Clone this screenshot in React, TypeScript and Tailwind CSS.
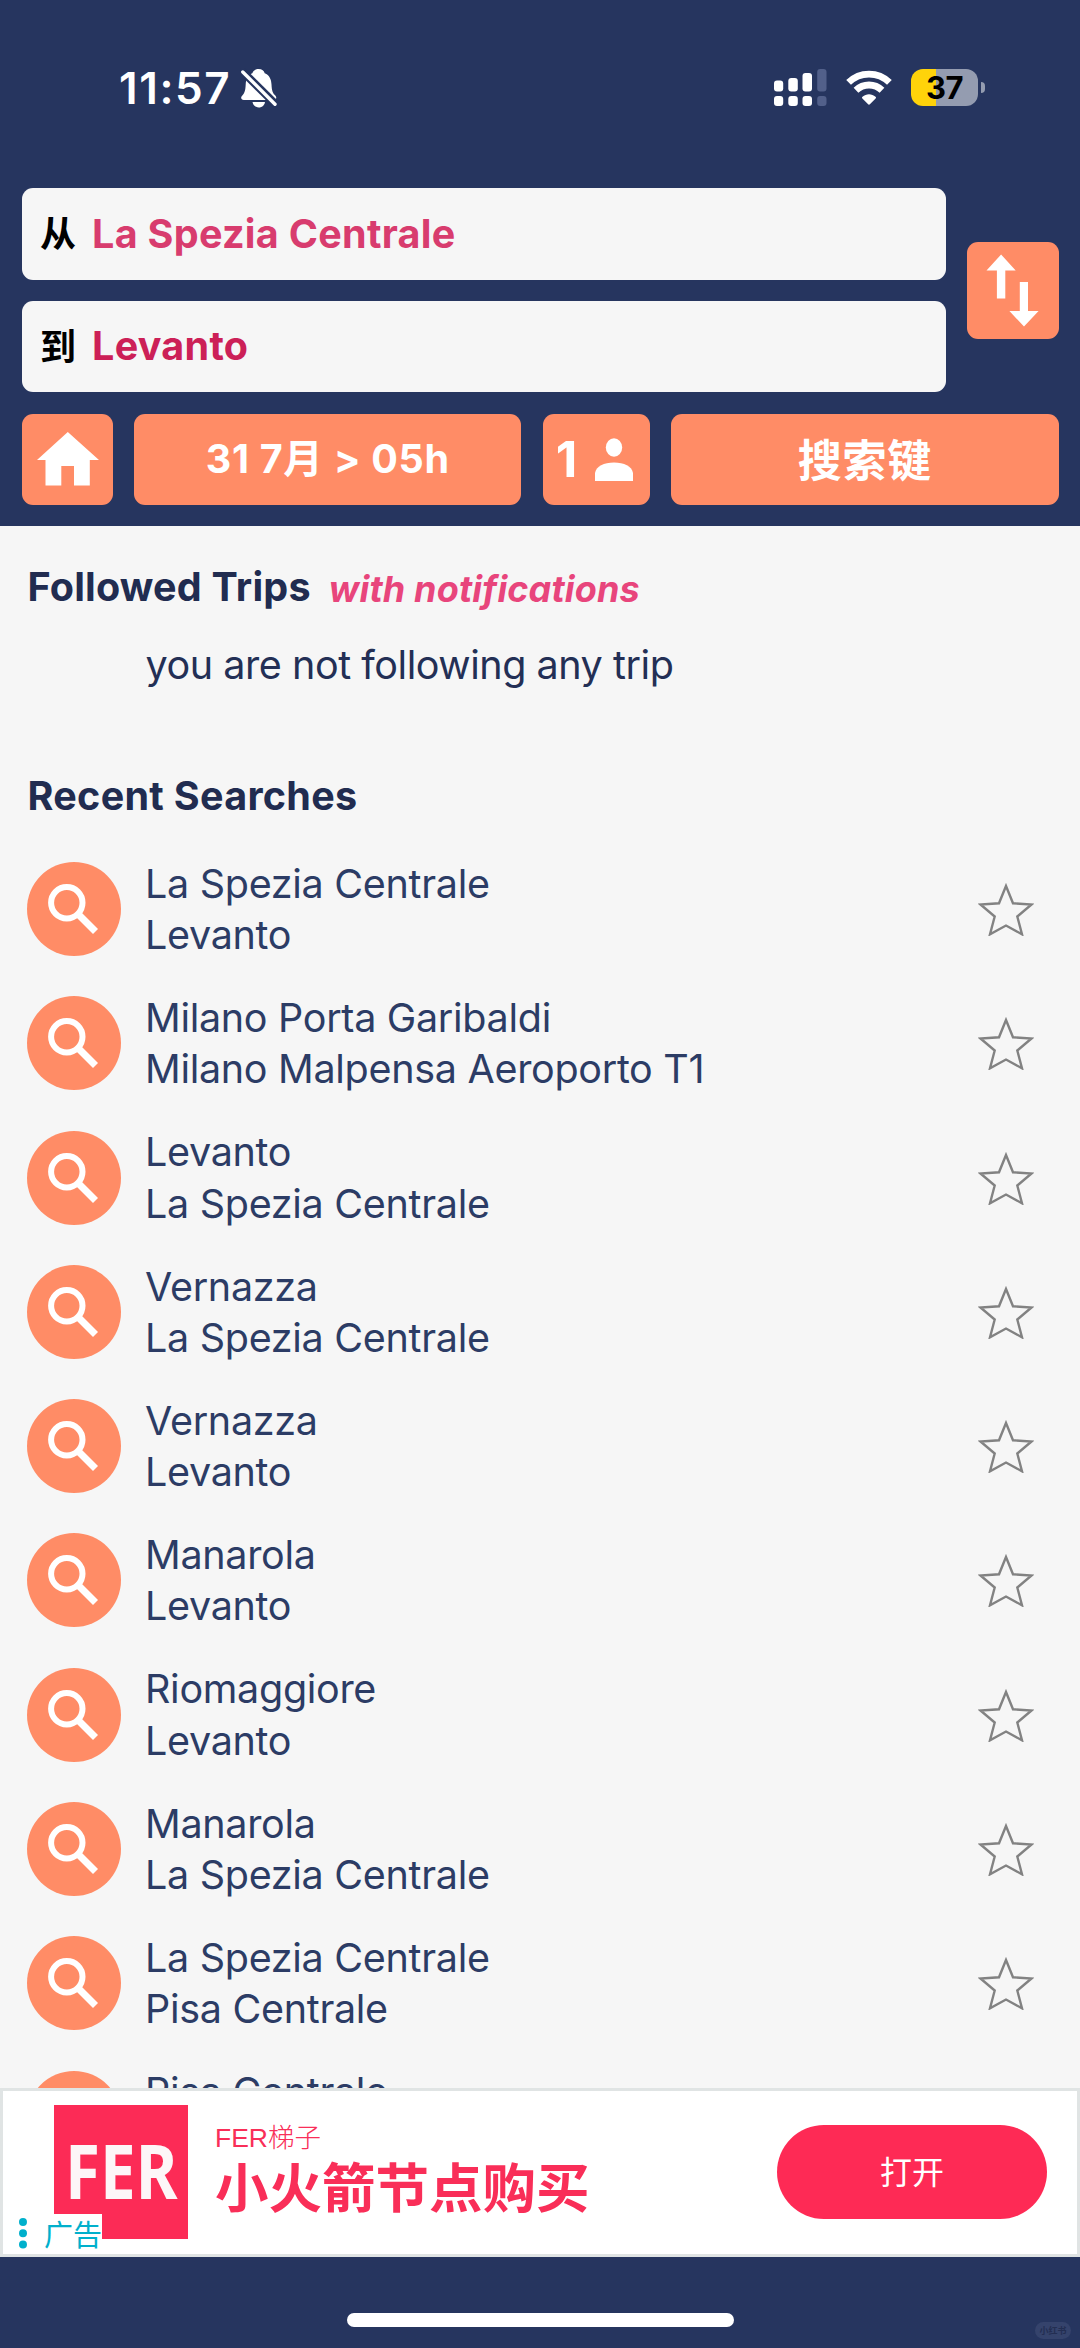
import type { ReactNode } from "react";

const searches: { from: string; to: string }[] = [
  { from: "La Spezia Centrale", to: "Levanto" },
  { from: "Milano Porta Garibaldi", to: "Milano Malpensa Aeroporto T1" },
  { from: "Levanto", to: "La Spezia Centrale" },
  { from: "Vernazza", to: "La Spezia Centrale" },
  { from: "Vernazza", to: "Levanto" },
  { from: "Manarola", to: "Levanto" },
  { from: "Riomaggiore", to: "Levanto" },
  { from: "Manarola", to: "La Spezia Centrale" },
  { from: "La Spezia Centrale", to: "Pisa Centrale" },
  { from: "Pisa Centrale", to: "La Spezia Centrale" },
];

function MutedBell() {
  return (
    <svg className="ml-[9px] h-[40px] w-[38px]" viewBox="0 0 38 40">
      <path
        fill="#fff"
        d="M18.500 1c3.600 0 5.600 2 6.200 4.200 4.800 2 6.600 6 6.800 11.300.3 6.500 1.300 8.800 4 11.300 1.500 1.600.8 4.200-1.700 4.200H3.800c-2.700 0-3.500-2.700-1.700-4.300C4.700 25.100 5.400 22.500 5.700 16.500 6 11 7.800 7.200 12.300 5.200 13 3 15 1 18.500 1Z"
      />
      <path fill="#fff" d="M12.500 34h12.500c-.6 3.300-3 5.500-6.200 5.500s-5.700-2.200-6.300-5.500Z" />
      <path stroke="#26355f" strokeWidth="8" d="M0 1 38 38.500" />
      <path stroke="#fff" strokeWidth="3.400" strokeLinecap="round" d="M2.800 4 35 36.200" />
    </svg>
  );
}

function Signal() {
  return (
    <svg className="h-[37px] w-[53px]" viewBox="0 0 53 37">
      <g fill="#fff">
        <rect x="0" y="11.500" width="9.200" height="11" rx="3" />
        <rect x="14.300" y="9" width="9.500" height="13.500" rx="3" />
        <rect x="28.500" y="4" width="9.500" height="18.500" rx="3" />
        <rect x="0" y="27" width="9.200" height="10" rx="3" />
        <rect x="14.300" y="27" width="9.500" height="10" rx="3" />
        <rect x="28.500" y="27" width="9.500" height="10" rx="3" />
      </g>
      <g fill="#52608a">
        <rect x="43.200" y="0" width="9.300" height="22.500" rx="3" />
        <rect x="43.200" y="27" width="9.300" height="10" rx="3" />
      </g>
    </svg>
  );
}

function Wifi() {
  return (
    <svg className="ml-[19px] h-[35px] w-[46px]" viewBox="0 0 46 35">
      <g fill="none" stroke="#fff" strokeWidth="6.800">
        <path d="M2.600 12.400C14 1.300 32 1.300 43.400 12.400" />
        <path d="M10 20.300c7.300-7.100 18.700-7.100 26 0" />
      </g>
      <path
        fill="#fff"
        d="M16.500 26.800c3.700-3.400 9.300-3.400 13 0 .7.600.7 1.200.1 1.800l-5.500 5.500c-.7.700-1.500.7-2.200 0l-5.500-5.500c-.6-.6-.6-1.200.1-1.800Z"
      />
    </svg>
  );
}

function Battery() {
  return (
    <div className="ml-[19px] flex items-center">
      <div className="flex h-[37px] w-[67px] items-center justify-center rounded-[12px] bg-linear-to-r from-[#ffd30a] from-[38%] to-[#949cb0] to-[38%]">
        <span className="text-[31px] leading-none font-bold tracking-[-0.5px] text-black">37</span>
      </div>
      <div className="ml-[3px] h-[11px] w-[4px] rounded-r-full bg-[#949cb0]" />
    </div>
  );
}

function StatusBar() {
  return (
    <div className="flex h-[175px] items-center pr-[95px] pl-[119px] text-white">
      <span className="text-[44px] leading-none font-semibold tracking-[1.600px]">11:57</span>
      <MutedBell />
      <div className="ml-auto flex items-center">
        <Signal />
        <Wifi />
        <Battery />
      </div>
    </div>
  );
}

function Station({ label, children }: { label: string; children: ReactNode }) {
  return (
    <div className="flex h-[91.500px] items-center rounded-[11px] bg-[#f6f6f6] pt-px pl-[18.500px] text-[39.500px] leading-none font-bold tracking-[0.300px]">
      <span className="w-[52px] text-[36px] font-bold tracking-normal text-black">{label}</span>
      {children}
    </div>
  );
}

function SearchForm() {
  return (
    <div className="px-[21.500px] pt-[13px]">
      <div className="flex items-center gap-[21.700px]">
        <div className="flex flex-1 flex-col gap-[21.300px]">
          <Station label="从">
            <span className="text-[#d83c6e]">La Spezia Centrale</span>
          </Station>
          <Station label="到">
            <span className="text-[#cc2057]">Levanto</span>
          </Station>
        </div>
        <button className="h-[97px] w-[91.300px] rounded-[11px] bg-[#ff8c66]">
          <svg className="h-[97px] w-[91.300px]" viewBox="0 0 91.300 97">
            <path fill="#fff" d="M34.100 12.500 48.700 28.500H38.300v28h-8.400v-28H19.500Z" />
            <path fill="#fff" d="M57 84.500 42.400 69H52.800V40h8.200v29h10.600Z" />
          </svg>
        </button>
      </div>
      <div className="mt-[21.300px] flex h-[91.500px] gap-[21.400px] *:rounded-[11px] *:bg-[#ff8c66]">
        <button className="w-[91.300px]">
          <svg className="h-[91.500px] w-[91.300px]" viewBox="0 0 91.300 91.500">
            <path fill="#fff" d="M45.800 18 77 46h-9.200v25.500H52V52H39.300v19.500H23.500V46H15Z" />
          </svg>
        </button>
        <button className="flex-1 pt-px text-[39.500px] font-bold tracking-[0.700px] text-white">
          31 7月 &gt; 05h
        </button>
        <button className="flex w-[107.300px] items-center text-white">
          <span className="ml-[13px] text-[50px] leading-none font-bold">1</span>
          <svg className="mt-px ml-[18px] h-[43px] w-[38px]" viewBox="0 0 38 43">
            <ellipse cx="19" cy="9.500" rx="8.200" ry="9.300" fill="#fff" />
            <path fill="#fff" d="M0 43V35C1 28.500 9 24.500 19 24.500s18 4 19 10.500v8Z" />
          </svg>
        </button>
        <button className="flex-1 pt-[3px] text-[44px] font-bold tracking-[0.800px] text-white">
          搜索键
        </button>
      </div>
    </div>
  );
}

function SearchRow({ from, to }: { from: string; to: string }) {
  return (
    <li className="flex h-[134.300px] shrink-0 items-center pr-[46px] pl-[27px]">
      <div className="mb-px size-[94px] shrink-0 rounded-full bg-[#ff8c66]">
        <svg className="size-[94px]" viewBox="0 0 94 94" fill="none" stroke="#fff">
          <circle cx="39.800" cy="40.700" r="15.700" strokeWidth="6" />
          <path strokeWidth="7" d="M51.500 52.500 68.500 69.500" />
        </svg>
      </div>
      <div className="mt-px ml-[24px] flex-1 text-[39.500px] leading-[51.300px] tracking-[-0.300px] text-[#2c3c65]">
        <div>{from}</div>
        <div>{to}</div>
      </div>
      <svg className="mb-[3px] h-[56px] w-[56px]" viewBox="0 0 56 56">
        <path
          fill="none"
          stroke="#828282"
          strokeWidth="2.400"
          d="M28 6 35 23.300 53.500 24.500 39.300 36.500 44 54.300 28 45.500 12 54.300 16.700 36.500 2.500 24.500 21 23.300Z"
        />
      </svg>
    </li>
  );
}

function AdBanner() {
  return (
    <div className="relative flex h-[169px] shrink-0 items-center border-[3px] border-[#e0e4e4] bg-white pr-[30px] pl-[51px]">
      <div className="flex size-[134px] items-center justify-center bg-[#fc2b56] pb-[4px]">
        <span className="scale-x-[0.850] font-['Noto_Sans'] text-[75px] leading-none font-bold text-[#fdf6f8]">
          FER
        </span>
      </div>
      <div className="ml-[27px] flex-1 text-[#f92e58]">
        <div className="font-['Liberation_Sans','Noto_Sans_CJK_SC',sans-serif] text-[26.500px] leading-[30px] font-light">
          FER梯子
        </div>
        <div className="mb-[4px] font-['Noto_Sans_CJK_SC',sans-serif] text-[53.500px] leading-[64px] font-bold">
          小火箭节点购买
        </div>
      </div>
      <button className="h-[94px] w-[270px] rounded-full bg-[#fe2a55] pb-[5px] font-['Noto_Sans_CJK_SC',sans-serif] text-[32px] font-normal text-white">
        打开
      </button>
      <div className="absolute bottom-0 left-0 flex h-[40px] w-[99px] items-center bg-white pl-[16px]">
        <svg className="h-[31px] w-[8px]" viewBox="0 0 8 31" fill="#00b0cc">
          <circle cx="4" cy="4" r="4" />
          <circle cx="4" cy="15.300" r="4" />
          <circle cx="4" cy="26.500" r="4" />
        </svg>
        <span className="ml-[17px] font-['Noto_Sans_CJK_SC',sans-serif] text-[29px] leading-none whitespace-nowrap text-[#00b0cc]">
          广告
        </span>
      </div>
    </div>
  );
}

export default function App() {
  return (
    <div className="flex h-[2348px] w-[1080px] flex-col overflow-hidden bg-[#f6f6f6] font-[Inter,'Noto_Sans_CJK_SC',sans-serif]">
      <header className="h-[526.300px] shrink-0 bg-[#26355f]">
        <StatusBar />
        <SearchForm />
      </header>

      <main className="flex min-h-0 flex-1 flex-col overflow-hidden pt-[35.300px]">
        <div className="flex items-baseline pl-[27.500px] leading-[48px]">
          <h2 className="text-[39.500px] font-bold tracking-[0.200px] text-[#212c50]">
            Followed Trips
          </h2>
          <span className="mt-[2px] ml-[18px] translate-y-px text-[36px] font-bold tracking-[0.150px] text-[#e8457c] italic">
            with notifications
          </span>
        </div>
        <p className="mt-[29px] pl-[145.500px] text-[39.500px] leading-[48px] tracking-[-0.450px] text-[#232f55]">
          you are not following any trip
        </p>
        <h2 className="mt-[83.700px] pl-[27.500px] text-[39.500px] leading-[48px] font-bold tracking-[0.300px] text-[#212c50]">
          Recent Searches
        </h2>
        <ul className="mt-[22px] flex flex-col">
          {searches.map((search, index) => (
            <SearchRow key={index} {...search} />
          ))}
        </ul>
      </main>

      <AdBanner />

      <footer className="relative flex h-[91.500px] shrink-0 justify-center bg-[#26355f] pt-[56.500px]">
        <div className="h-[13.500px] w-[387px] rounded-full bg-white" />
        <span className="absolute right-[9px] bottom-[9px] flex h-[17px] w-[36px] items-center justify-center rounded-full bg-[#35436c] text-[9px] font-bold text-[#232e52]">
          小红书
        </span>
      </footer>
    </div>
  );
}
